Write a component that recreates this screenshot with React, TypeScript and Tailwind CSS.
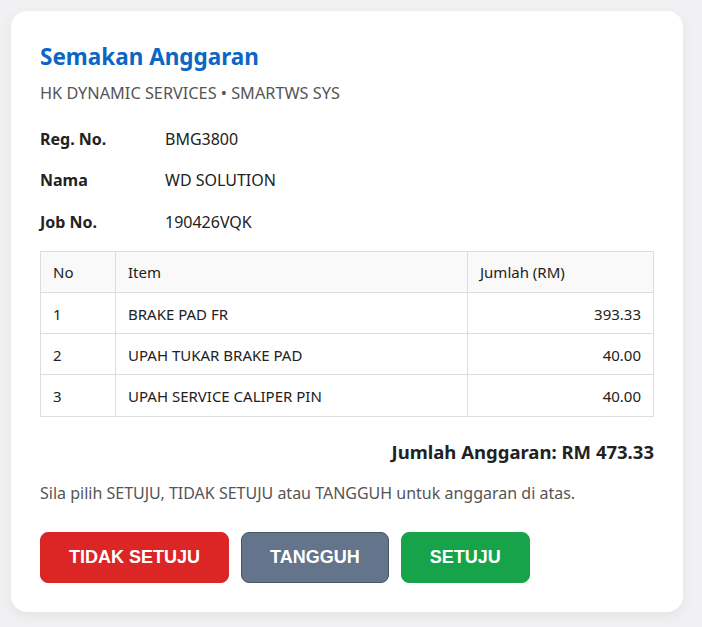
import React from "react";

const rows = [
  { no: 1, item: "BRAKE PAD FR", amt: "393.33" },
  { no: 2, item: "UPAH TUKAR BRAKE PAD", amt: "40.00" },
  { no: 3, item: "UPAH SERVICE CALIPER PIN", amt: "40.00" },
];

export default function App() {
  return (
    <div className="min-h-[627px] bg-[#f1f1f3] pt-[11px] pb-[16px] px-[11px]" style={{ fontFamily: '"Noto Sans", "Open Sans", sans-serif' }}>
      <div className="w-[672px] rounded-[16px] bg-white px-[29px] pt-[28px] pb-[29px] shadow-[0_4px_14px_rgba(0,0,0,0.06)]">
        <h1 className="text-[22.5px] font-bold leading-[36px] text-[#0b66c6]">Semakan Anggaran</h1>
        <div className="mt-[6px] text-[16.3px] leading-[24px] text-[#555]">HK DYNAMIC SERVICES • SMARTWS SYS</div>

        <div className="mt-[13px] flex flex-col text-[16px] text-[#222]">
          {[
            ["Reg. No.", "BMG3800"],
            ["Nama", "WD SOLUTION"],
            ["Job No.", "190426VQK"],
          ].map(([k, v]) => (
            <div key={k} className="flex h-[41.5px] items-center">
              <div className="w-[125px] font-bold">{k}</div>
              <div>{v}</div>
            </div>
          ))}
        </div>

        <table className="mt-[8px] w-full border-collapse text-[15px] text-[#222]">
          <thead>
            <tr className="bg-[#f9f9f9]">
              <th className="h-[41.3px] w-[75px] border border-[#dddddd] px-[12px] pt-[2px] text-left font-normal">No</th>
              <th className="h-[41.3px] border border-[#dddddd] px-[12px] pt-[2px] text-left font-normal">Item</th>
              <th className="h-[41.3px] w-[186px] border border-[#dddddd] px-[12px] pt-[2px] text-left font-normal">Jumlah (RM)</th>
            </tr>
          </thead>
          <tbody>
            {rows.map((r) => (
              <tr key={r.no}>
                <td className="h-[41.3px] border border-[#dddddd] px-[12px] pt-[2px]">{r.no}</td>
                <td className="h-[41.3px] border border-[#dddddd] px-[12px] pt-[2px]">{r.item}</td>
                <td className="h-[41.3px] border border-[#dddddd] px-[12px] pt-[2px] text-right">{r.amt}</td>
              </tr>
            ))}
          </tbody>
        </table>

        <div className="mt-[23px] text-right text-[18.5px] font-bold leading-[24px] text-[#222]">Jumlah Anggaran: RM 473.33</div>
        <div className="mt-[17px] text-[16px] leading-[24px] text-[#555]">
          Sila pilih SETUJU, TIDAK SETUJU atau TANGGUH untuk anggaran di atas.
        </div>

        <div className="mt-[27px] flex gap-[12px]" style={{ fontFamily: '"Liberation Sans", Arial, sans-serif' }}>
          <button className="h-[51px] rounded-[8px] border border-[#dc2626] bg-[#dc2626] px-7 text-[18px] font-bold text-white">TIDAK SETUJU</button>
          <button className="h-[51px] rounded-[8px] border border-[#475569] bg-[#64748b] px-7 text-[18px] font-bold text-white">TANGGUH</button>
          <button className="h-[51px] rounded-[8px] border border-[#16a34a] bg-[#16a34a] px-7 text-[18px] font-bold text-white">SETUJU</button>
        </div>
      </div>
    </div>
  );
}
